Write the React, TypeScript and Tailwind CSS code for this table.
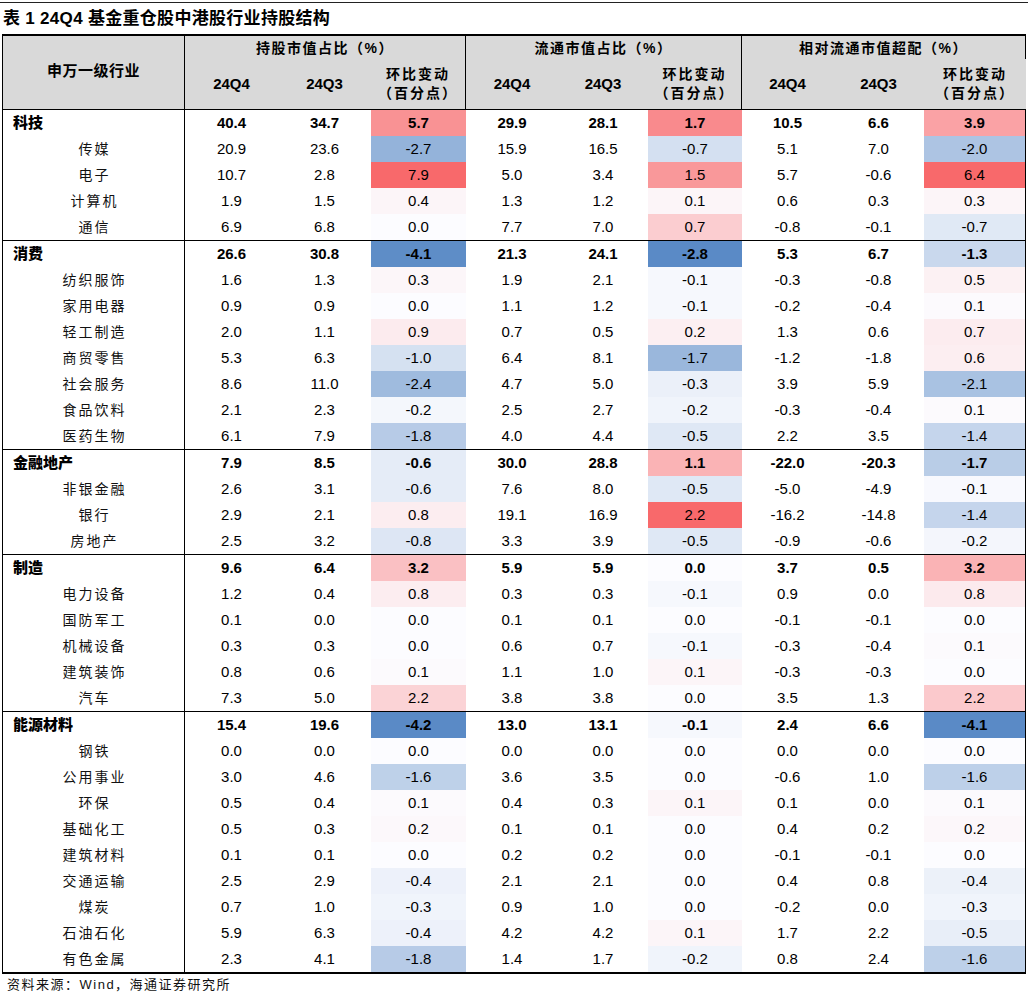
import React from 'react';

type Row = { name: string; bold?: boolean; v: number[] };

const sections: Row[][] = [
  [
    { name: '科技', bold: true, v: [40.4, 34.7, 5.7, 29.9, 28.1, 1.7, 10.5, 6.6, 3.9] },
    { name: '传媒', v: [20.9, 23.6, -2.7, 15.9, 16.5, -0.7, 5.1, 7.0, -2.0] },
    { name: '电子', v: [10.7, 2.8, 7.9, 5.0, 3.4, 1.5, 5.7, -0.6, 6.4] },
    { name: '计算机', v: [1.9, 1.5, 0.4, 1.3, 1.2, 0.1, 0.6, 0.3, 0.3] },
    { name: '通信', v: [6.9, 6.8, 0.0, 7.7, 7.0, 0.7, -0.8, -0.1, -0.7] },
  ],
  [
    { name: '消费', bold: true, v: [26.6, 30.8, -4.1, 21.3, 24.1, -2.8, 5.3, 6.7, -1.3] },
    { name: '纺织服饰', v: [1.6, 1.3, 0.3, 1.9, 2.1, -0.1, -0.3, -0.8, 0.5] },
    { name: '家用电器', v: [0.9, 0.9, 0.0, 1.1, 1.2, -0.1, -0.2, -0.4, 0.1] },
    { name: '轻工制造', v: [2.0, 1.1, 0.9, 0.7, 0.5, 0.2, 1.3, 0.6, 0.7] },
    { name: '商贸零售', v: [5.3, 6.3, -1.0, 6.4, 8.1, -1.7, -1.2, -1.8, 0.6] },
    { name: '社会服务', v: [8.6, 11.0, -2.4, 4.7, 5.0, -0.3, 3.9, 5.9, -2.1] },
    { name: '食品饮料', v: [2.1, 2.3, -0.2, 2.5, 2.7, -0.2, -0.3, -0.4, 0.1] },
    { name: '医药生物', v: [6.1, 7.9, -1.8, 4.0, 4.4, -0.5, 2.2, 3.5, -1.4] },
  ],
  [
    { name: '金融地产', bold: true, v: [7.9, 8.5, -0.6, 30.0, 28.8, 1.1, -22.0, -20.3, -1.7] },
    { name: '非银金融', v: [2.6, 3.1, -0.6, 7.6, 8.0, -0.5, -5.0, -4.9, -0.1] },
    { name: '银行', v: [2.9, 2.1, 0.8, 19.1, 16.9, 2.2, -16.2, -14.8, -1.4] },
    { name: '房地产', v: [2.5, 3.2, -0.8, 3.3, 3.9, -0.5, -0.9, -0.6, -0.2] },
  ],
  [
    { name: '制造', bold: true, v: [9.6, 6.4, 3.2, 5.9, 5.9, 0.0, 3.7, 0.5, 3.2] },
    { name: '电力设备', v: [1.2, 0.4, 0.8, 0.3, 0.3, -0.1, 0.9, 0.0, 0.8] },
    { name: '国防军工', v: [0.1, 0.0, 0.0, 0.1, 0.1, 0.0, -0.1, -0.1, 0.0] },
    { name: '机械设备', v: [0.3, 0.3, 0.0, 0.6, 0.7, -0.1, -0.3, -0.4, 0.1] },
    { name: '建筑装饰', v: [0.8, 0.6, 0.1, 1.1, 1.0, 0.1, -0.3, -0.3, 0.0] },
    { name: '汽车', v: [7.3, 5.0, 2.2, 3.8, 3.8, 0.0, 3.5, 1.3, 2.2] },
  ],
  [
    { name: '能源材料', bold: true, v: [15.4, 19.6, -4.2, 13.0, 13.1, -0.1, 2.4, 6.6, -4.1] },
    { name: '钢铁', v: [0.0, 0.0, 0.0, 0.0, 0.0, 0.0, 0.0, 0.0, 0.0] },
    { name: '公用事业', v: [3.0, 4.6, -1.6, 3.6, 3.5, 0.0, -0.6, 1.0, -1.6] },
    { name: '环保', v: [0.5, 0.4, 0.1, 0.4, 0.3, 0.1, 0.1, 0.0, 0.1] },
    { name: '基础化工', v: [0.5, 0.3, 0.2, 0.1, 0.1, 0.0, 0.4, 0.2, 0.2] },
    { name: '建筑材料', v: [0.1, 0.1, 0.0, 0.2, 0.2, 0.0, -0.1, -0.1, 0.0] },
    { name: '交通运输', v: [2.5, 2.9, -0.4, 2.1, 2.1, 0.0, 0.4, 0.8, -0.4] },
    { name: '煤炭', v: [0.7, 1.0, -0.3, 0.9, 1.0, 0.0, -0.2, 0.0, -0.3] },
    { name: '石油石化', v: [5.9, 6.3, -0.4, 4.2, 4.2, 0.1, 1.7, 2.2, -0.5] },
    { name: '有色金属', v: [2.3, 4.1, -1.8, 1.4, 1.7, -0.2, 0.8, 2.4, -1.6] },
  ],
];

// excel style red-white-blue scale, midpoint = median (0.0 for every column here)
const allRows = sections.flat();
const range = (col: number) => {
  const vals = allRows.map((r) => r.v[col]);
  return { min: Math.min(...vals), max: Math.max(...vals) };
};
const ranges: Record<number, { min: number; max: number }> = { 2: range(2), 5: range(5), 8: range(8) };

const mid = [252, 252, 255];
const red = [248, 105, 107];
const blue = [90, 138, 198];

const heat = (v: number, col: number) => {
  const { min, max } = ranges[col];
  const t = v >= 0 ? (max ? v / max : 0) : v / min;
  const end = v >= 0 ? red : blue;
  const c = mid.map((m, i) => Math.round(m + (end[i] - m) * t));
  return `rgb(${c[0]}, ${c[1]}, ${c[2]})`;
};

const grid = 'grid grid-cols-[182px_93px_93px_95px_92px_90px_94px_91px_91px_102px]';
const groupEnd = [2, 5];

const App = () => {
  return (
    <div className="w-[1032px] h-[995px] bg-white text-black font-['Liberation_Sans','Noto_Sans_CJK_SC',sans-serif]">
      <div className="pt-[2px]">
        <div className="h-px w-[1028px] bg-[#222]" />
      </div>
      <div className="h-[31px] flex items-center pl-[3px] text-[17px] font-bold tracking-[0.3px]">
        表 1 24Q4 基金重仓股中港股行业持股结构
      </div>

      <div className="ml-[2px] w-[1024px] border-l border-black">
        {/* header */}
        <div className={`${grid} grid-rows-[23px_50px] bg-[#d9d9d9] border-t-2 border-b border-black`}>
          <div className="row-span-2 border-r border-black flex items-center justify-center pb-[2px] text-[15px] font-bold tracking-[0.5px]">
            申万一级行业
          </div>
          {['持股市值占比（%）', '流通市值占比（%）', '相对流通市值超配（%）'].map((t) => (
            <div
              key={t}
              className="col-span-3 border-r border-black flex items-center justify-center pt-[1px] text-[14px] font-bold tracking-[1.5px]"
            >
              {t}
            </div>
          ))}
          {[0, 1, 2].map((g) => (
            <React.Fragment key={g}>
              <div className="flex items-center justify-center text-[15px] font-bold">24Q4</div>
              <div className="flex items-center justify-center text-[15px] font-bold">24Q3</div>
              <div
                className={`flex flex-col items-center justify-center text-[14px] font-bold leading-[19px] tracking-[2px] ${
                  g < 2 ? 'border-r border-black' : ''
                }`}
              >
                <span>环比变动</span>
                <span>（百分点）</span>
              </div>
            </React.Fragment>
          ))}
        </div>

        {/* body */}
        {sections.map((rows, si) => (
          <div
            key={si}
            className={si === sections.length - 1 ? 'border-b-2 border-black' : 'border-b border-black'}
          >
            {rows.map((row) => (
              <div key={row.name} className={`${grid} h-[26px]`}>
                {row.bold ? (
                  <div className="border-r border-black flex items-center pl-[10px] text-[15px] font-black">
                    {row.name}
                  </div>
                ) : (
                  <div className="border-r border-black flex items-center justify-center pl-[2px] text-[14px] tracking-[2px] text-[#111]">
                    {row.name}
                  </div>
                )}
                {row.v.map((v, i) => {
                  const isChange = i % 3 === 2;
                  return (
                    <div
                      key={i}
                      className={`flex items-center justify-center text-[15px] ${row.bold ? 'font-bold' : ''} ${
                        groupEnd.includes(Math.floor(i / 3)) && isChange ? 'border-r border-black' : ''
                      }`}
                      style={isChange ? { backgroundColor: heat(v, i) } : undefined}
                    >
                      {v.toFixed(1)}
                    </div>
                  );
                })}
              </div>
            ))}
          </div>
        ))}
      </div>

      <div className="mt-[1px] h-[20px] flex items-center pl-[7px] text-[13px] tracking-[1.5px] text-[#111]">
        资料来源：Wind，海通证券研究所
      </div>
    </div>
  );
};

export default App;
